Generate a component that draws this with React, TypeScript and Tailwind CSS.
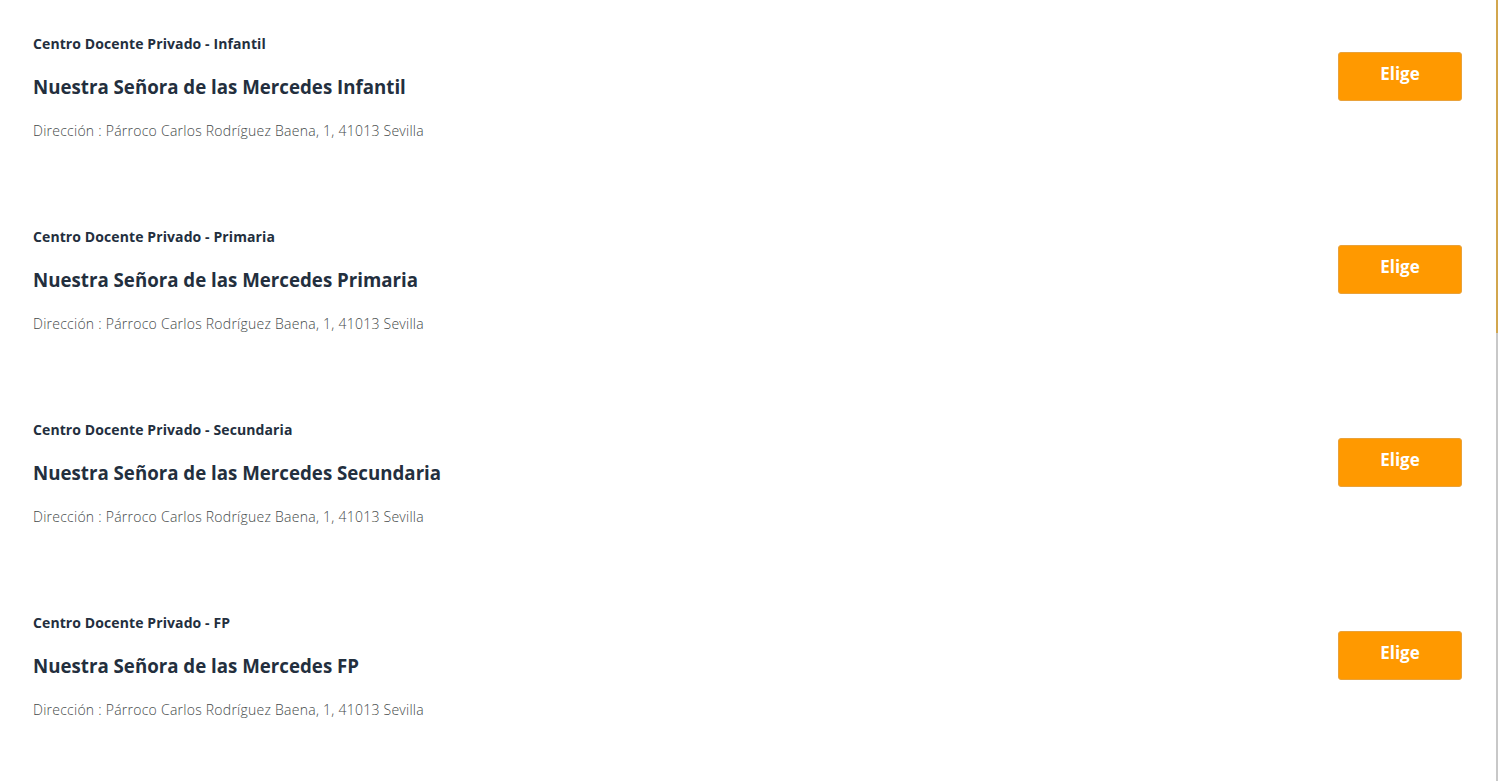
const centros = [
  { tipo: 'Infantil', nombre: 'Nuestra Señora de las Mercedes Infantil' },
  { tipo: 'Primaria', nombre: 'Nuestra Señora de las Mercedes Primaria' },
  { tipo: 'Secundaria', nombre: 'Nuestra Señora de las Mercedes Secundaria' },
  { tipo: 'FP', nombre: 'Nuestra Señora de las Mercedes FP' },
];

export default function App() {
  return (
    <div className="flex h-[781px] w-full overflow-hidden bg-white font-['Open_Sans',sans-serif]">
      <div className="flex-1">
        {centros.map((c) => (
          <div key={c.tipo} className="flex h-[193px] justify-between pl-[33px] pr-[34px] pt-[35px]">
            <div className="flex flex-col">
              <p className="text-[14px] leading-[18px] font-bold tracking-[0.1px] text-[#232f3e]">
                Centro Docente Privado - {c.tipo}
              </p>
              <h2 className="mt-[21px] text-[18.7px] leading-[26px] font-bold text-[#232f3e]">{c.nombre}</h2>
              <p className="mt-[22px] text-[14px] leading-[18px] font-light tracking-[0.25px] text-[#454a4a]">
                Dirección : Párroco Carlos Rodríguez Baena, 1, 41013 Sevilla
              </p>
            </div>
            <button className="mt-[17px] flex h-[49px] w-[124px] items-start justify-center rounded-[3px] border border-[#e9a23b] bg-[#ff9900] pt-[10px] text-[17px] leading-[22px] font-bold text-white">
              Elige
            </button>
          </div>
        ))}
      </div>
      <div className="flex w-[2px] flex-col">
        <div className="h-[333px] bg-[#d2a64e]" />
        <div className="flex-1 bg-[#c8c8c8]" />
      </div>
    </div>
  );
}
